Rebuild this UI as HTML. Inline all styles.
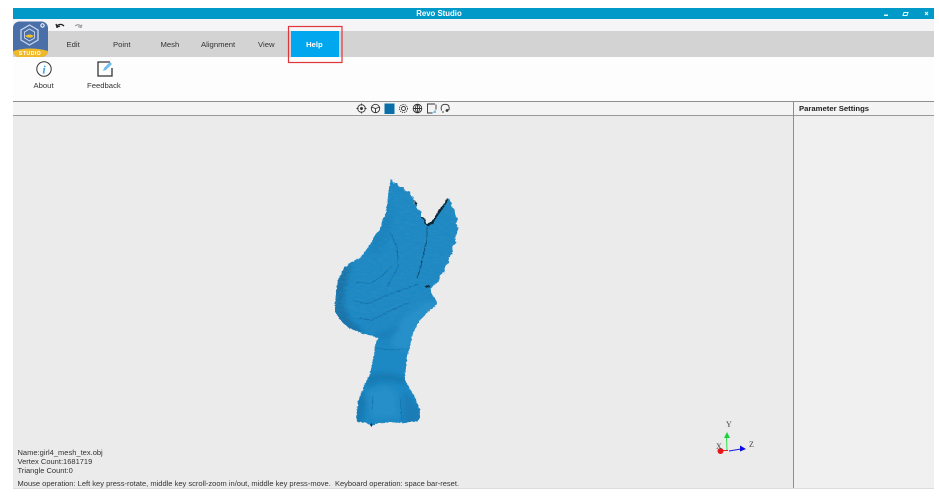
<!DOCTYPE html>
<html><head><meta charset="utf-8"><style>
html,body{margin:0;padding:0;background:#fff;width:939px;height:501px;overflow:hidden}
body{position:relative;font-family:"Liberation Sans",sans-serif;font-size:7.700px;color:#333;filter:blur(.3px)}
.a{position:absolute}
.t{position:absolute;white-space:nowrap;line-height:10px}
</style></head><body>
<div class="a" style="left:13px;top:8px;width:921px;height:11px;background:#0099c8"></div>
<div class="t" style="left:13px;width:852px;top:9px;text-align:center;color:#fff;font-weight:bold;font-size:7.800px;line-height:9px">Revo Studio</div>
<div class="a" style="left:13px;top:19px;width:921px;height:12px;background:#f5f5f7"></div>
<div class="a" style="left:13px;top:31px;width:921px;height:26px;background:#d3d3d3"></div>
<div class="a" style="left:13px;top:57px;width:921px;height:44px;background:#fdfdfd"></div>
<div class="a" style="left:13px;top:101px;width:921px;height:1px;background:#8f8f8f"></div>
<div class="a" style="left:13px;top:102px;width:921px;height:13px;background:#f4f4f4"></div>
<div class="a" style="left:13px;top:115px;width:921px;height:1px;background:#9a9a9a"></div>
<div class="a" style="left:13px;top:116px;width:780px;height:372px;background:#ebebeb"></div>
<div class="a" style="left:793px;top:102px;width:1px;height:386px;background:#8f8f8f"></div>
<div class="a" style="left:794px;top:116px;width:140px;height:372px;background:#f0f0f0"></div>
<div class="a" style="left:13px;top:488px;width:921px;height:1px;background:#dcdcdc"></div>

<svg class="a" style="left:0;top:0" width="939" height="501" viewBox="0 0 939 501">
<defs>
<clipPath id="sil"><path d="M391 178 393 183 397 183 399 187 403 187 405 191 410 192 411 196 414 198 414 203 417 205 417 209 421 211 421 216 425 219 426 224 431 222 436 216 440 209 445 204 448 198 451 202 452 207 455 210 455 214 458 219 456 224 458 228 457 233 455 238 456 243 452 247 453 252 449 257 449 262 445 267 445 272 440 275 439 281 434 285 431 288 432 295 436 300 437 304 433 308 428 311 424 316 419 321 416 327 413 333 411 341 409 350 407 358 406 367 405 375 405 380 409 387 413 394 417 402 420 410 420 418 418 421 410 422 400 423 390 422 378 423 372 426 366 423 358 422 356 419 357 411 358 401 361 393 365 384 370 374 372 364 374 353 375 346 378 338 372 336 364 334 356 331 349 328 343 323 339 318 335 312 335 303 336 294 337 285 340 276 344 268 350 263 356 260 361 257 366 250 372 242 375 235 381 228 382 221 386 213 387 205 388 197 389 188z"/></clipPath>
<filter id="jag" x="-5%" y="-5%" width="110%" height="110%"><feTurbulence type="fractalNoise" baseFrequency=".45" numOctaves="2" seed="4"/><feDisplacementMap in="SourceGraphic" scale="2.600" xChannelSelector="R" yChannelSelector="G"/></filter>
<filter id="noise" x="0" y="0" width="100%" height="100%"><feTurbulence type="fractalNoise" baseFrequency=".18 .75" numOctaves="2" seed="7"/><feColorMatrix values="0 0 0 0 .04  0 0 0 0 .32  0 0 0 0 .52  1.800 0 0 0 -.72"/></filter>
<filter id="soft" x="-30%" y="-30%" width="160%" height="160%"><feGaussianBlur stdDeviation="2.500"/></filter>
<linearGradient id="fade" gradientUnits="userSpaceOnUse" x1="0" y1="175" x2="0" y2="345"><stop offset=".8" stop-color="#fff"/><stop offset="1" stop-color="#000"/></linearGradient>
<mask id="upper" maskUnits="userSpaceOnUse" x="325" y="170" width="140" height="180"><rect x="325" y="170" width="140" height="180" fill="url(#fade)"/></mask>
<clipPath id="logoClip"><rect x="13" y="21.500" width="35" height="35.500" rx="6.500"/></clipPath>
</defs>
<!-- window controls -->
<rect x="884" y="14.500" width="4" height="1.500" fill="#dff"/>
<path d="M903 15.500l1-3h4l-1 3z" fill="none" stroke="#dff" stroke-width="1"/>
<path d="M925 12l3 3m0-3l-3 3" stroke="#eff" stroke-width="1.100"/>
<!-- undo/redo -->
<path d="M57 28v-2.500q4-2.500 7 .5M56 24l1 3 3-1" fill="none" stroke="#222" stroke-width="1.300"/>
<path d="M81 28v-2q-3-2.500-6 0M82 24.500l-1 3-3-1" fill="none" stroke="#999" stroke-width="1.100"/>
<!-- logo -->
<g clip-path="url(#logoClip)">
<rect x="13" y="21" width="35" height="36" fill="#4a6fa8"/>
<path d="M13 51q17-5 35 0v7H13z" fill="#f0b92a"/>
</g>
<path d="M29.500 25l8.500 5v10l-8.500 5-8.500-5V30z" fill="none" stroke="#c9d6ea" stroke-width="1.300"/>
<path d="M29.500 29l5 3v6l-5 3-5-3v-6z" fill="none" stroke="#d8e2f0" stroke-width=".8"/>
<path d="M25 36q4.500-3 9 0q-4.500 3.500-9 0z" fill="#f5c024"/>
<circle cx="42.500" cy="25.500" r="1.700" fill="none" stroke="#fff" stroke-width="1"/>
<text x="30" y="55" text-anchor="middle" font-family="Liberation Sans" font-weight="bold" font-size="5.300" fill="#fff" letter-spacing=".4">STUDIO</text>
<!-- Help tab -->
<rect x="291" y="31" width="48" height="26" fill="#00a7ef"/>
<rect x="288.500" y="26.500" width="53.500" height="36" fill="none" stroke="#e0353a" stroke-width="1.200"/>
<!-- about icon -->
<circle cx="44" cy="69" r="7.200" fill="#fff" stroke="#333" stroke-width="1"/>
<text x="44" y="73.500" text-anchor="middle" font-family="Liberation Serif" font-style="italic" font-weight="bold" font-size="12" fill="#3ea6e6">i</text>
<!-- feedback icon -->
<path d="M110 62h-12v14h14v-8" fill="none" stroke="#333" stroke-width="1.300"/>
<path d="M103 71l1-3 6-6 2 2-6 6z" fill="#6fbdec"/>
<!-- toolbar icons -->
<g fill="none" stroke="#333" stroke-width=".9">
<circle cx="361.500" cy="108.500" r="3.800"/><circle cx="361.500" cy="108.500" r="1" fill="#333"/><path d="M361.500 103.500v2M361.500 111.500v2M356.500 108.500h2M364.500 108.500h2"/>
<circle cx="375.500" cy="108.500" r="4.200"/><path d="M371.500 107l4 1.500 4-1.500M375.500 108.500v4"/>
<circle cx="403.500" cy="108.500" r="2"/><circle cx="403.500" cy="108.500" r="4" stroke-dasharray="1.200 1"/>
<circle cx="417.500" cy="108.500" r="4.300"/><path d="M413 108.500h9M417.500 104v9"/><ellipse cx="417.500" cy="108.500" rx="2" ry="4.300"/>
<path d="M435 104h-7.500v9h5M436 104.500v5"/>
<path d="M441.500 110.500q-1.500-6 3.500-6.200q5-.2 4 5.500h-2M443 113v-2"/>
</g>
<rect x="384.500" y="103.500" width="10" height="10.500" fill="#0a6fa8"/>
<path d="M432 113l4-4v4z" fill="#7ec4ee"/>
<circle cx="447" cy="110.500" r="1.400" fill="#333"/>
<!-- mesh -->
<g filter="url(#jag)">
<g clip-path="url(#sil)">
<rect x="330" y="175" width="132" height="255" fill="#1f88c4"/>
<!-- soft tones -->
<g filter="url(#soft)">
<path fill="#0f5f92" opacity=".55" d="M334 285 342 270 352 262 346 285 343 305 352 322 366 334 350 332 334 316z"/>
<path fill="#2d95cf" opacity=".6" d="M426 302 440 304 425 318 415 330 408 352 392 346 396 325z"/>
<path fill="#1a78b0" opacity=".5" d="M372 336 392 328 402 320 398 332 384 340z"/>
<path fill="#1671a8" opacity=".65" d="M368 374 388 373 405 377 407 385 396 382 380 381 367 387z"/>
<path fill="#1671a8" opacity=".65" d="M354 424 357 400 362 390 366 404 362 424z"/>
<path fill="#1671a8" opacity=".5" d="M404 390 422 412 422 424 404 424z"/>
<path fill="#2c93cc" opacity=".5" d="M368 392 384 386 396 392 398 416 372 418z"/>
<path fill="#1a7db8" opacity=".5" d="M385 200 380 228 368 250 376 256 390 236 392 205z"/>
</g>
<g mask="url(#upper)"><rect x="330" y="175" width="132" height="175" filter="url(#noise)" opacity=".5"/></g>
<!-- cracks -->
<g fill="none" stroke="#0f5f92" stroke-width=".55" opacity=".8">
<path d="M390 232 397 248 398 267 392 278 387 287"/>
<path d="M356 282 370 284 382 276 392 266"/>
<path d="M352 300 368 304 385 296 402 290 418 284"/>
<path d="M355 318 372 320 392 310 410 302"/>
<path d="M376 348 390 350 408 349"/>
<path d="M372 410 373 396M400 398 402 420"/>
</g>
<g fill="none" stroke="#114a72" stroke-width=".8">
<path d="M427 227 427 240 424 252 420 270 417 278"/>
</g>
</g>
<!-- black edge pieces -->
<g fill="#0a2636">
<path d="M414 200l3 3 0 3-2-2z"/>
<path d="M421 216l4 3 1 5 4-1 5-6 4-7 5-6 3-6 1 3-3 4-4 6-5 7-3 6-5 2-3-2-1-4-3-2z"/>
<path d="M424 286l5-1 1 2-4 1z"/>
<circle cx="371.500" cy="425" r="1.200"/>
</g>
</g>
<!-- axes -->
<path d="M720 450.500h8" stroke="#d22" stroke-width="1"/>
<path d="M727 450 726.500 438" stroke="#2ce24a" stroke-width="1"/>
<path d="M729 451 741 449" stroke="#1b1bd8" stroke-width="1"/>
<path d="M727 432l3 6h-6z" fill="#1ed13b"/>
<path d="M746 449l-6-3.500v6z" fill="#0a0ae0"/>
<circle cx="720.500" cy="451" r="3" fill="#e81515"/>
<g font-family="Liberation Serif" font-size="8" fill="#444">
<text x="726" y="427">Y</text><text x="749" y="447">Z</text><text x="716" y="449">X</text>
</g>
</svg>

<div class="t" style="left:66.500px;top:40px">Edit</div>
<div class="t" style="left:113px;top:40px">Point</div>
<div class="t" style="left:160.500px;top:40px">Mesh</div>
<div class="t" style="left:201px;top:40px">Alignment</div>
<div class="t" style="left:258px;top:40px">View</div>
<div class="t" style="left:306px;top:40px;color:#fff;font-weight:bold">Help</div>
<div class="t" style="left:33.500px;top:80.500px">About</div>
<div class="t" style="left:87px;top:80.500px">Feedback</div>
<div class="t" style="left:799px;top:103.500px;font-weight:bold;color:#222;font-size:7.700px">Parameter Settings</div>
<div class="t" style="left:17.500px;top:449px;line-height:8.800px;font-size:7.520px">Name:girl4_mesh_tex.obj<br>Vertex Count:1681719<br>Triangle Count:0</div>
<div class="t" style="left:17.500px;top:479px;font-size:7.520px">Mouse operation: Left key press-rotate, middle key scroll-zoom in/out, middle key press-move.&nbsp; Keyboard operation: space bar-reset.</div>
</body></html>
